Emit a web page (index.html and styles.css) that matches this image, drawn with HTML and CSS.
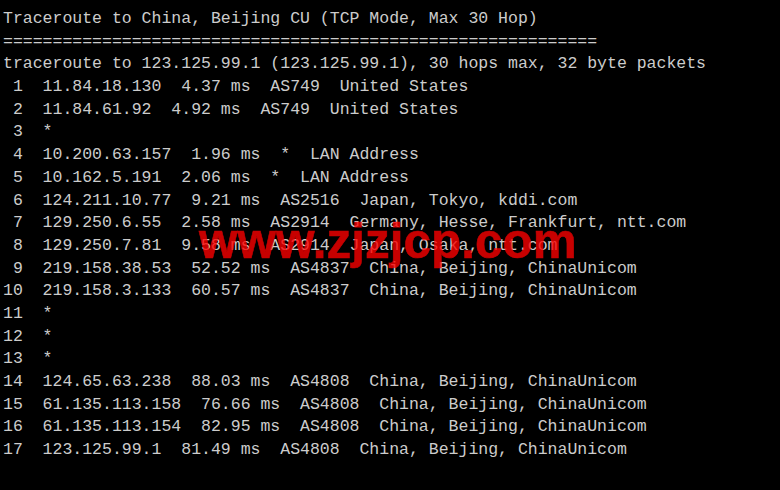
FILE: index.html
```html
<!DOCTYPE html>
<html lang="en">
<head>
<meta charset="utf-8">
<title>Traceroute</title>
<link rel="stylesheet" href="styles.css">
</head>
<body>
<main class="console">
<pre class="output">Traceroute to China, Beijing CU (TCP Mode, Max 30 Hop)
============================================================
traceroute to 123.125.99.1 (123.125.99.1), 30 hops max, 32 byte packets
 1  11.84.18.130  4.37 ms  AS749  United States
 2  11.84.61.92  4.92 ms  AS749  United States
 3  *
 4  10.200.63.157  1.96 ms  *  LAN Address
 5  10.162.5.191  2.06 ms  *  LAN Address
 6  124.211.10.77  9.21 ms  AS2516  Japan, Tokyo, kddi.com
 7  129.250.6.55  2.58 ms  AS2914  Germany, Hesse, Frankfurt, ntt.com
 8  129.250.7.81  9.58 ms  AS2914  Japan, Osaka, ntt.com
 9  219.158.38.53  52.52 ms  AS4837  China, Beijing, ChinaUnicom
10  219.158.3.133  60.57 ms  AS4837  China, Beijing, ChinaUnicom
11  *
12  *
13  *
14  124.65.63.238  88.03 ms  AS4808  China, Beijing, ChinaUnicom
15  61.135.113.158  76.66 ms  AS4808  China, Beijing, ChinaUnicom
16  61.135.113.154  82.95 ms  AS4808  China, Beijing, ChinaUnicom
17  123.125.99.1  81.49 ms  AS4808  China, Beijing, ChinaUnicom</pre>
<div class="watermark" aria-hidden="true">www.zjzjcp.com</div>
</main>
</body>
</html>
```

FILE: styles.css
```css
html, body {
  margin: 0;
  padding: 0;
  background: #000;
  width: 780px;
  height: 490px;
  overflow: hidden;
}

.console {
  position: relative;
  width: 780px;
  height: 490px;
  box-sizing: border-box;
  padding: 8px 0 0 3px;
  background: #000;
}

.output {
  margin: 0;
  font-family: "Liberation Mono", "DejaVu Sans Mono", monospace;
  font-size: 16.5px;
  line-height: 22.68px;
  color: #cccccc;
  white-space: pre;
}

.watermark {
  position: absolute;
  left: 199px;
  top: 216px;
  font-family: "Liberation Sans", Arial, sans-serif;
  font-weight: 700;
  font-size: 49.5px;
  line-height: 49px;
  color: #ff0000;
  opacity: 0.78;
  white-space: nowrap;
  -webkit-text-stroke: 0.6px #ff0000;
  pointer-events: none;
}
```
